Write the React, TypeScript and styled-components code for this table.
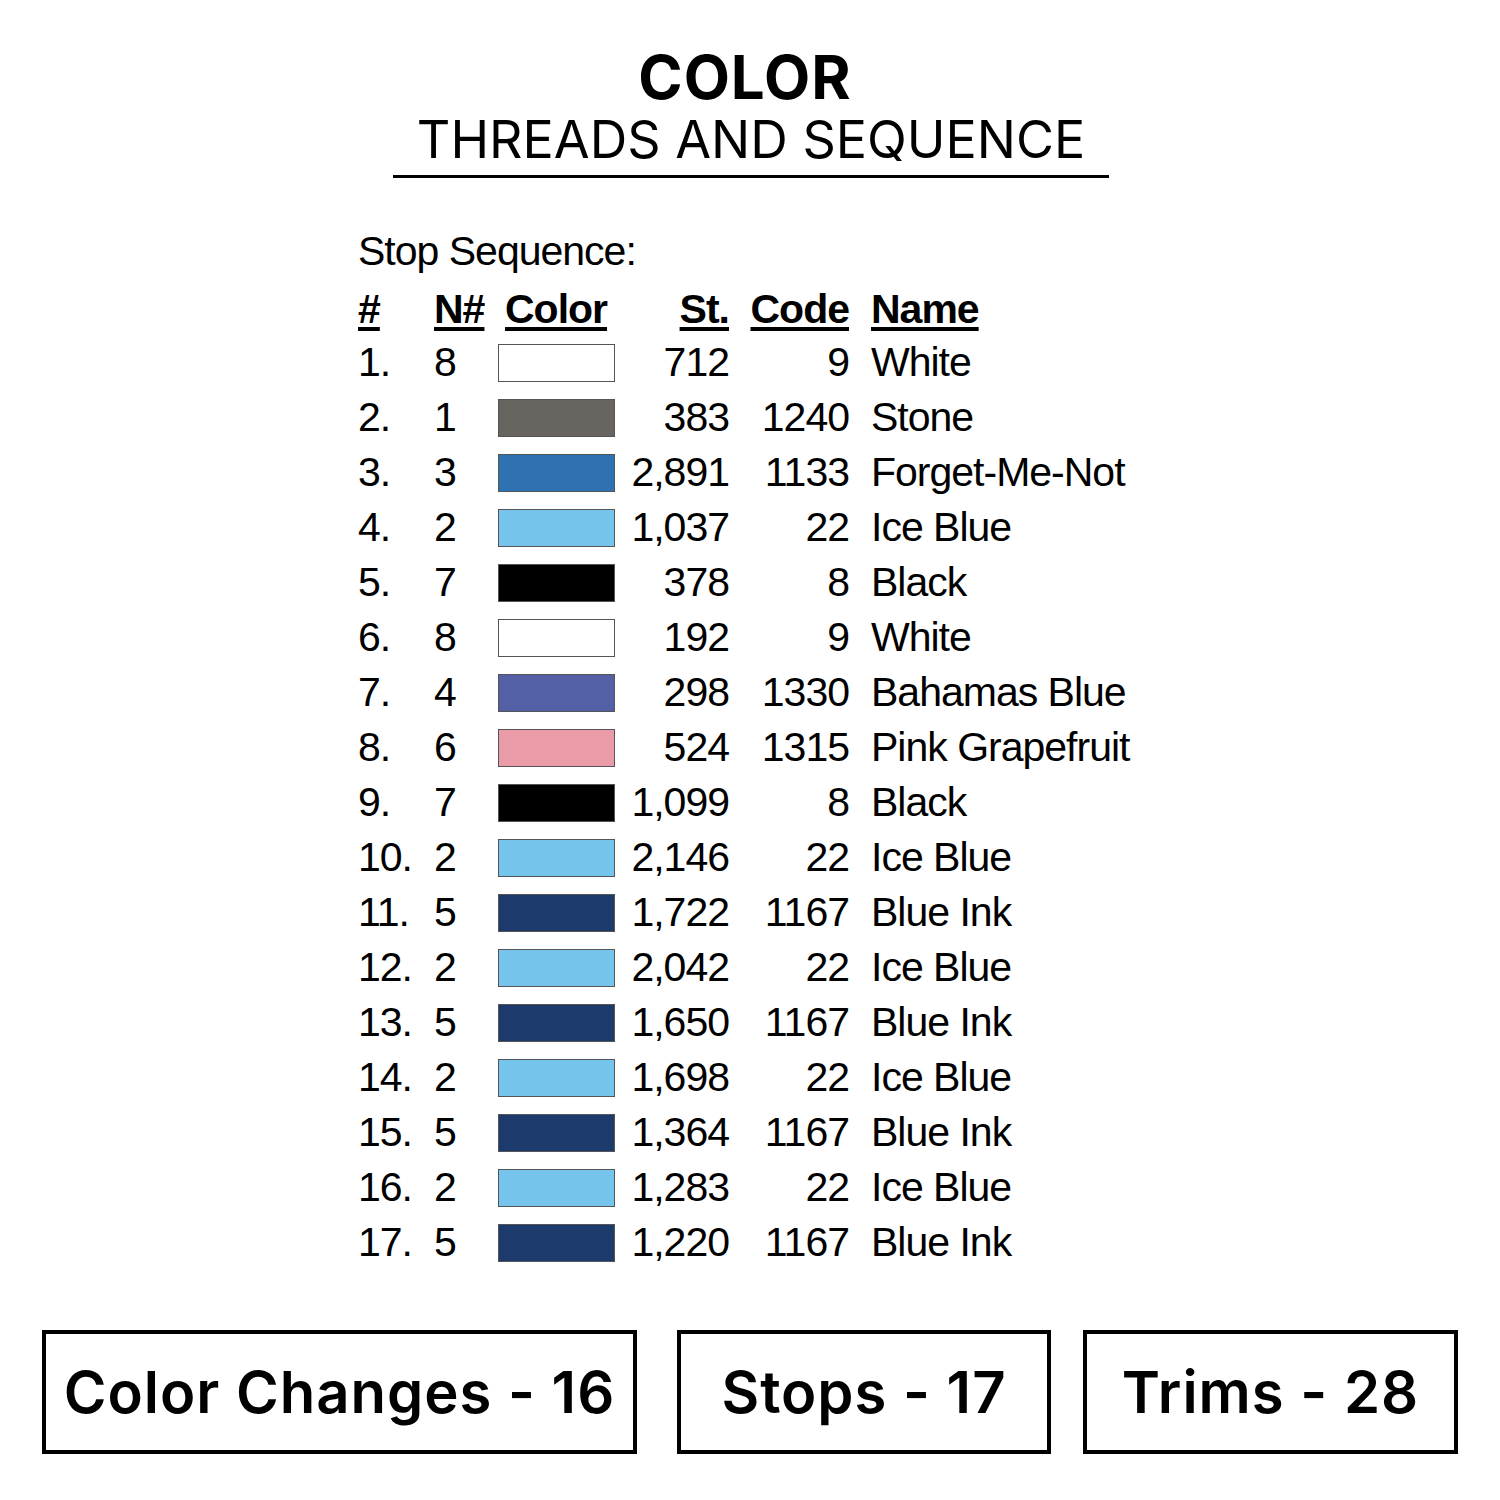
import React from 'react'
import styled, { createGlobalStyle } from 'styled-components';

const GlobalStyle = createGlobalStyle`
    html, body {
        margin: 0;
        padding: 0;
        background: #fff;
    }
`;

const Page = styled.div`
    width: 1500px;
    height: 1500px;
    background: #fff;
    color: #000;
    display: flex;
    flex-direction: column;
    align-items: center;
    overflow: hidden;
`;

const Header = styled.header`
    display: flex;
    flex-direction: column;
    align-items: center;
    margin-top: 44px;
    width: 716px;
    margin-left: 2px;
    border-bottom: 3.5px solid #000;
    padding-bottom: 5px;
`;

const Title = styled.h1`
    margin: 0 12px 0 0;
    font-family: Inter, "Noto Sans", sans-serif;
    font-weight: 700;
    font-size: 60px;
    line-height: 66px;
    letter-spacing: 1px;
`;

const Subtitle = styled.h2`
    margin: 0;
    font-family: Inter, "Noto Sans", sans-serif;
    font-weight: 400;
    font-size: 52px;
    line-height: 60px;
    letter-spacing: 0;
`;

const Body = styled.section`
    align-self: flex-start;
    margin-left: 358px;
    margin-top: 50px;
    font-family: "Liberation Sans", Arial, sans-serif;
    font-size: 41px;
    letter-spacing: -1px;
`;

const Caption = styled.div`
    line-height: 46px;
    margin-bottom: 8px;
`;

const Table = styled.div`
    display: grid;
    grid-template-columns: 76px 64px 117px 114px 120px auto;
    grid-auto-rows: 55px;
    align-items: center;
`;

const Head = styled.div<{ $align?: 'left' | 'right'; $indent?: number }>`
    font-weight: 700;
    text-decoration: underline;
    text-decoration-thickness: 3.5px;
    text-underline-offset: 4px;
    text-align: ${p => p.$align ?? 'left'};
    padding-left: ${p => p.$indent ?? 0}px;
`;

const Cell = styled.div<{ $align?: 'left' | 'right'; $indent?: number }>`
    text-align: ${p => p.$align ?? 'left'};
    padding-left: ${p => p.$indent ?? 0}px;
    white-space: nowrap;
    margin-top: -4px;
`;

const Swatch = styled.div<{ $color: string }>`
    height: 36px;
    background: ${p => p.$color};
    border: 1.5px solid #555;
    margin-top: -4px;
`;

const Footer = styled.footer`
    margin-top: auto;
    margin-bottom: 46px;
    display: flex;
    align-self: flex-start;
    margin-left: 42px;
`;

const Stat = styled.div<{ $width: number; $gap: number }>`
    width: ${p => p.$width}px;
    height: 124px;
    box-sizing: border-box;
    border: 4.5px solid #000;
    margin-right: ${p => p.$gap}px;
    display: flex;
    align-items: center;
    justify-content: center;
    font-family: Inter, "Noto Sans", sans-serif;
    font-weight: 600;
    font-size: 58px;
    letter-spacing: 1px;
`;

const threads = [
    { n: 8, color: '#ffffff', st: '712', code: '9', name: 'White' },
    { n: 1, color: '#67645f', st: '383', code: '1240', name: 'Stone' },
    { n: 3, color: '#2f72b2', st: '2,891', code: '1133', name: 'Forget-Me-Not' },
    { n: 2, color: '#75c4ec', st: '1,037', code: '22', name: 'Ice Blue' },
    { n: 7, color: '#000000', st: '378', code: '8', name: 'Black' },
    { n: 8, color: '#ffffff', st: '192', code: '9', name: 'White' },
    { n: 4, color: '#5460a6', st: '298', code: '1330', name: 'Bahamas Blue' },
    { n: 6, color: '#e99ba8', st: '524', code: '1315', name: 'Pink Grapefruit' },
    { n: 7, color: '#000000', st: '1,099', code: '8', name: 'Black' },
    { n: 2, color: '#75c4ec', st: '2,146', code: '22', name: 'Ice Blue' },
    { n: 5, color: '#1d3a6c', st: '1,722', code: '1167', name: 'Blue Ink' },
    { n: 2, color: '#75c4ec', st: '2,042', code: '22', name: 'Ice Blue' },
    { n: 5, color: '#1d3a6c', st: '1,650', code: '1167', name: 'Blue Ink' },
    { n: 2, color: '#75c4ec', st: '1,698', code: '22', name: 'Ice Blue' },
    { n: 5, color: '#1d3a6c', st: '1,364', code: '1167', name: 'Blue Ink' },
    { n: 2, color: '#75c4ec', st: '1,283', code: '22', name: 'Ice Blue' },
    { n: 5, color: '#1d3a6c', st: '1,220', code: '1167', name: 'Blue Ink' },
];

const App: React.FC = () => {
    return (
        <>
            <GlobalStyle />
            <Page>
                <Header>
                    <Title>COLOR</Title>
                    <Subtitle>THREADS AND SEQUENCE</Subtitle>
                </Header>
                <Body>
                    <Caption>Stop Sequence:</Caption>
                    <Table>
                        <Head>#</Head>
                        <Head>N#</Head>
                        <Head $indent={7}>Color</Head>
                        <Head $align="right">St.</Head>
                        <Head $align="right">Code</Head>
                        <Head $indent={22}>Name</Head>
                        {threads.map((t, i) => (
                            <React.Fragment key={i}>
                                <Cell>{i + 1}.</Cell>
                                <Cell>{t.n}</Cell>
                                <Swatch $color={t.color} />
                                <Cell $align="right">{t.st}</Cell>
                                <Cell $align="right">{t.code}</Cell>
                                <Cell $indent={22}>{t.name}</Cell>
                            </React.Fragment>
                        ))}
                    </Table>
                </Body>
                <Footer>
                    <Stat $width={595} $gap={40}>Color Changes - 16</Stat>
                    <Stat $width={374} $gap={32}>Stops - 17</Stat>
                    <Stat $width={375} $gap={0}>Trims - 28</Stat>
                </Footer>
            </Page>
        </>
    );
}
export default App;
